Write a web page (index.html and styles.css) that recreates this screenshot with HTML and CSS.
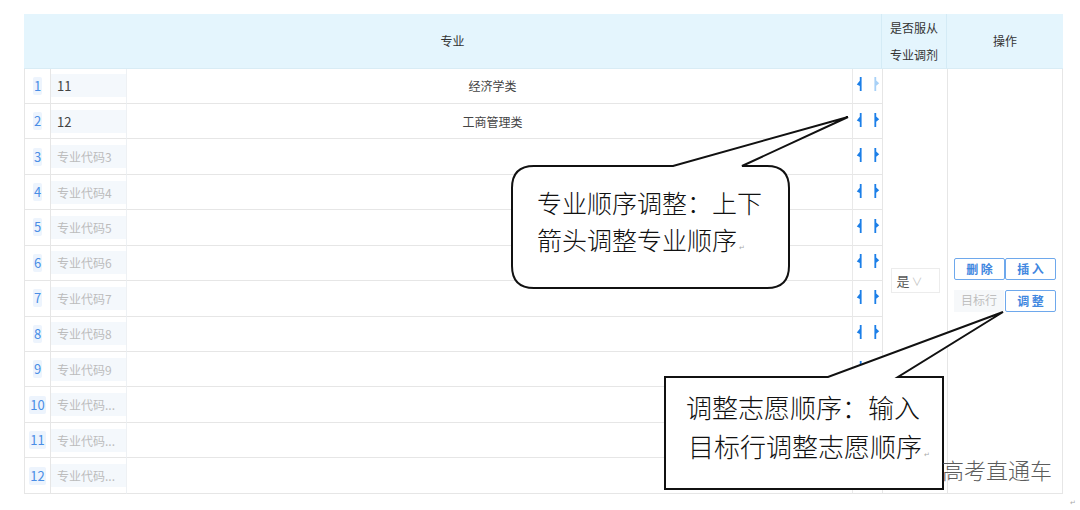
FILE: index.html
```html
<!DOCTYPE html>
<html lang="zh-CN">
  <head>
    <meta charset="UTF-8" />
    <meta name="viewport" content="width=device-width, initial-scale=1.0" />
    <title>专业志愿</title>
    <link rel="stylesheet" href="styles.css">
  </head>
  <body>
    <div class="page">
      <div class="grid">
        <div class="hd hd-major">专业</div>
        <div class="hd hd-fu">是否服从<br />专业调剂</div>
        <div class="hd hd-op">操作</div>

        <div class="fu"><div class="sel">是<span class="chev">∨</span></div></div>
        <div class="op">
          <div class="btns">
            <span class="btn">删 除</span><span class="btn">插 入</span>
          </div>
          <div class="btns">
            <span class="target">目标行</span><span class="btn">调 整</span>
          </div>
        </div>

        <div class="idx"><span>1</span></div>
        <div class="code"><span class="in">11</span></div>
        <div class="name">经济学类</div>
        <div class="arr"><svg class="dn" viewBox="0 0 6 14"><path d="M3.8 0h1.8v14H3.8zM3.8 3.8L0.8 7.6L3.8 9z"/></svg><svg class="up off" viewBox="0 0 6 14"><path d="M0.4 0h1.8v14H0.4zM2.2 3.4L5.2 6.2L2.2 8.8z"/></svg></div>

        <div class="idx"><span>2</span></div>
        <div class="code"><span class="in">12</span></div>
        <div class="name">工商管理类</div>
        <div class="arr"><svg class="dn" viewBox="0 0 6 14"><path d="M3.8 0h1.8v14H3.8zM3.8 3.8L0.8 7.6L3.8 9z"/></svg><svg class="up" viewBox="0 0 6 14"><path d="M0.4 0h1.8v14H0.4zM2.2 3.4L5.2 6.2L2.2 8.8z"/></svg></div>

        <div class="idx"><span>3</span></div>
        <div class="code"><span class="in ph">专业代码3</span></div>
        <div class="name"></div>
        <div class="arr"><svg class="dn" viewBox="0 0 6 14"><path d="M3.8 0h1.8v14H3.8zM3.8 3.8L0.8 7.6L3.8 9z"/></svg><svg class="up" viewBox="0 0 6 14"><path d="M0.4 0h1.8v14H0.4zM2.2 3.4L5.2 6.2L2.2 8.8z"/></svg></div>

        <div class="idx"><span>4</span></div>
        <div class="code"><span class="in ph">专业代码4</span></div>
        <div class="name"></div>
        <div class="arr"><svg class="dn" viewBox="0 0 6 14"><path d="M3.8 0h1.8v14H3.8zM3.8 3.8L0.8 7.6L3.8 9z"/></svg><svg class="up" viewBox="0 0 6 14"><path d="M0.4 0h1.8v14H0.4zM2.2 3.4L5.2 6.2L2.2 8.8z"/></svg></div>

        <div class="idx"><span>5</span></div>
        <div class="code"><span class="in ph">专业代码5</span></div>
        <div class="name"></div>
        <div class="arr"><svg class="dn" viewBox="0 0 6 14"><path d="M3.8 0h1.8v14H3.8zM3.8 3.8L0.8 7.6L3.8 9z"/></svg><svg class="up" viewBox="0 0 6 14"><path d="M0.4 0h1.8v14H0.4zM2.2 3.4L5.2 6.2L2.2 8.8z"/></svg></div>

        <div class="idx"><span>6</span></div>
        <div class="code"><span class="in ph">专业代码6</span></div>
        <div class="name"></div>
        <div class="arr"><svg class="dn" viewBox="0 0 6 14"><path d="M3.8 0h1.8v14H3.8zM3.8 3.8L0.8 7.6L3.8 9z"/></svg><svg class="up" viewBox="0 0 6 14"><path d="M0.4 0h1.8v14H0.4zM2.2 3.4L5.2 6.2L2.2 8.8z"/></svg></div>

        <div class="idx"><span>7</span></div>
        <div class="code"><span class="in ph">专业代码7</span></div>
        <div class="name"></div>
        <div class="arr"><svg class="dn" viewBox="0 0 6 14"><path d="M3.8 0h1.8v14H3.8zM3.8 3.8L0.8 7.6L3.8 9z"/></svg><svg class="up" viewBox="0 0 6 14"><path d="M0.4 0h1.8v14H0.4zM2.2 3.4L5.2 6.2L2.2 8.8z"/></svg></div>

        <div class="idx"><span>8</span></div>
        <div class="code"><span class="in ph">专业代码8</span></div>
        <div class="name"></div>
        <div class="arr"><svg class="dn" viewBox="0 0 6 14"><path d="M3.8 0h1.8v14H3.8zM3.8 3.8L0.8 7.6L3.8 9z"/></svg><svg class="up" viewBox="0 0 6 14"><path d="M0.4 0h1.8v14H0.4zM2.2 3.4L5.2 6.2L2.2 8.8z"/></svg></div>

        <div class="idx"><span>9</span></div>
        <div class="code"><span class="in ph">专业代码9</span></div>
        <div class="name"></div>
        <div class="arr"><svg class="dn" viewBox="0 0 6 14"><path d="M3.8 0h1.8v14H3.8zM3.8 3.8L0.8 7.6L3.8 9z"/></svg><svg class="up" viewBox="0 0 6 14"><path d="M0.4 0h1.8v14H0.4zM2.2 3.4L5.2 6.2L2.2 8.8z"/></svg></div>

        <div class="idx"><span>10</span></div>
        <div class="code"><span class="in ph">专业代码...</span></div>
        <div class="name"></div>
        <div class="arr"><svg class="dn" viewBox="0 0 6 14"><path d="M3.8 0h1.8v14H3.8zM3.8 3.8L0.8 7.6L3.8 9z"/></svg><svg class="up" viewBox="0 0 6 14"><path d="M0.4 0h1.8v14H0.4zM2.2 3.4L5.2 6.2L2.2 8.8z"/></svg></div>

        <div class="idx"><span>11</span></div>
        <div class="code"><span class="in ph">专业代码...</span></div>
        <div class="name"></div>
        <div class="arr"><svg class="dn" viewBox="0 0 6 14"><path d="M3.8 0h1.8v14H3.8zM3.8 3.8L0.8 7.6L3.8 9z"/></svg><svg class="up" viewBox="0 0 6 14"><path d="M0.4 0h1.8v14H0.4zM2.2 3.4L5.2 6.2L2.2 8.8z"/></svg></div>

        <div class="idx"><span>12</span></div>
        <div class="code"><span class="in ph">专业代码...</span></div>
        <div class="name"></div>
        <div class="arr"><svg class="dn" viewBox="0 0 6 14"><path d="M3.8 0h1.8v14H3.8zM3.8 3.8L0.8 7.6L3.8 9z"/></svg><svg class="up" viewBox="0 0 6 14"><path d="M0.4 0h1.8v14H0.4zM2.2 3.4L5.2 6.2L2.2 8.8z"/></svg></div>
      </div>

      <!-- annotation callouts drawn over the table -->
      <svg class="notes" viewBox="0 0 1080 510">
        <path class="bubble" d="M534 166H673L848 117L742 166H767Q789 166 789 188V266Q789 288 767 288H534Q512 288 512 266V188Q512 166 534 166Z"/>
        <text class="note" x="537" y="213">专业顺序调整：上下</text>
        <text class="note" x="537" y="250">箭头调整专业顺序<tspan class="mark" dx="2">↵</tspan></text>

        <path class="bubble" d="M665 377H828L1003 312L898 377H943V489H665Z"/>
        <text class="note n2" x="686" y="418">调整志愿顺序：输入</text>
        <text class="note n2" x="688" y="457">目标行调整志愿顺序<tspan class="mark" dx="2">↵</tspan></text>

        <text class="wm" x="942" y="479">高考直通车</text>
        <text class="mark" x="1070" y="505">↵</text>
      </svg>
    </div>
  </body>
</html>
```

FILE: styles.css
```css
* {
  margin: 0;
  padding: 0;
  box-sizing: border-box;
}
body {
  background: #fff;
  font-family: "Noto Sans CJK SC", "Noto Sans", sans-serif;
  color: #333;
}
.page {
  position: relative;
  width: 1080px;
  height: 510px;
  padding: 14px 0 0 24px;
  overflow: hidden;
}
.grid {
  display: grid;
  width: 1039px;
  grid-template-columns: 27px 76px 725px 30px 65px 116px;
  grid-template-rows: 54.5px repeat(12, 35.45px);
  font-size: 12px;
}
.hd {
  background: #e4f5fd;
  display: flex;
  align-items: center;
  justify-content: center;
  text-align: center;
  color: #333;
  border-bottom: 1px solid #d9ecf5;
}
.hd-major {
  grid-column: 1 / 5;
  border-right: 1px solid #d4ebf6;
}
.hd-fu {
  line-height: 27px;
  border-right: 1px solid #d4ebf6;
}
.idx {
  border-left: 1px solid #e6e6e6;
  border-right: 1px solid #e6e6e6;
  border-bottom: 1px solid #e6e6e6;
  display: flex;
  align-items: center;
  justify-content: center;
}
.idx span {
  background: #edf4fd;
  color: #4a8ee6;
  font-size: 13px;
  line-height: 18px;
  padding: 0 1px;
  border-radius: 2px;
}
.code {
  border-right: 1px solid #eef1f4;
  border-bottom: 1px solid #e6e6e6;
  display: flex;
  align-items: center;
}
.in {
  display: block;
  width: 100%;
  height: 23px;
  line-height: 23px;
  padding-left: 6px;
  background: #f4f8fc;
  font-size: 13px;
  color: #444;
  white-space: nowrap;
}
.in.ph {
  font-size: 12px;
  color: #bcbcbc;
}
.name {
  border-bottom: 1px solid #e6e6e6;
  display: flex;
  align-items: center;
  justify-content: center;
  padding-left: 6px;
  color: #444;
}
.arr {
  border-left: 1px solid #e9e9e9;
  border-bottom: 1px solid #e6e6e6;
  display: flex;
  align-items: center;
  gap: 12px;
  padding: 0 0 3px 3px;
}
.arr svg {
  width: 6px;
  height: 14px;
  fill: #1c7fe8;
}
.arr svg.off {
  fill: #a8d1f7;
}
.fu {
  grid-column: 5;
  grid-row: 2 / span 12;
  border-left: 1px solid #e6e6e6;
  border-bottom: 1px solid #e6e6e6;
  display: flex;
  align-items: center;
  justify-content: center;
}
.sel {
  width: 49px;
  height: 25px;
  border: 1px solid #ececec;
  font-size: 13px;
  line-height: 23px;
  color: #555;
  padding-left: 5px;
}
.chev {
  color: #c4c4c4;
  font-size: 11px;
  margin-left: 2px;
}
.op {
  grid-column: 6;
  grid-row: 2 / span 12;
  border-left: 1px solid #e6e6e6;
  border-right: 1px solid #e6e6e6;
  border-bottom: 1px solid #e6e6e6;
  display: flex;
  flex-direction: column;
  align-items: center;
  justify-content: center;
  gap: 10px;
  padding: 8px 0 0 0;
}
.btns {
  display: flex;
}
.btn,
.target {
  display: block;
  width: 51px;
  height: 22px;
  line-height: 20px;
  text-align: center;
  font-size: 12px;
}
.btn {
  border: 1px solid #6ea8ec;
  border-radius: 2px;
  color: #3f87e0;
  font-weight: 700;
}
.target {
  width: 50px;
  margin-right: 1px;
  background: #f6f8fa;
  color: #bfbfbf;
}
.notes {
  position: absolute;
  left: 0;
  top: 0;
  width: 1080px;
  height: 510px;
  pointer-events: none;
}
.bubble {
  fill: #fff;
  stroke: #111;
  stroke-width: 2;
  stroke-linejoin: miter;
}
.note {
  font-family: "Noto Sans CJK SC", sans-serif;
  font-size: 25px;
  font-weight: 300;
  fill: #111;
}
.note.n2 {
  font-size: 26px;
}
.mark {
  font-size: 7px;
  fill: #aaa;
}
.wm {
  font-family: "Noto Sans CJK SC", sans-serif;
  font-size: 22px;
  font-weight: 300;
  fill: #5c5c5c;
}
```
